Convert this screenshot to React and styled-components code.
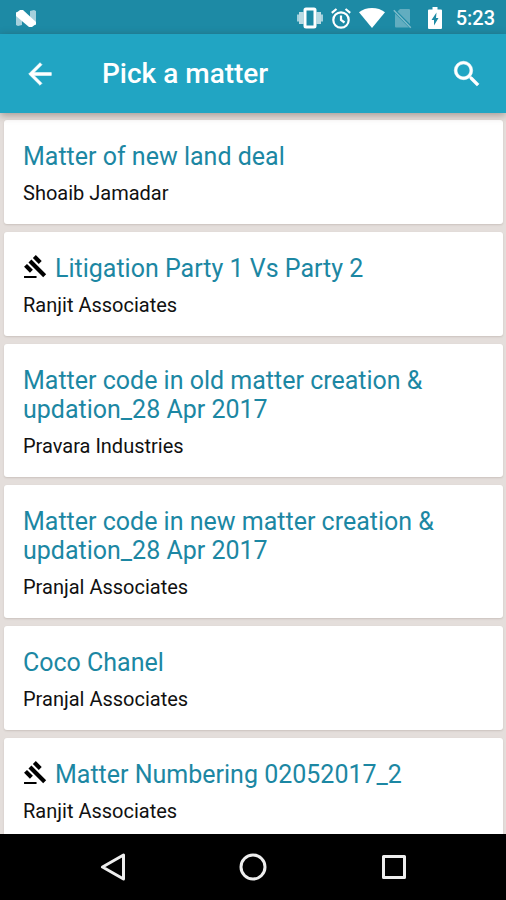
import React from 'react';
import styled, { createGlobalStyle } from 'styled-components';
import { MdArrowBack, MdGavel, MdSearch } from 'react-icons/md';

const GlobalStyle = createGlobalStyle`
	* {
		box-sizing: border-box;
	}

	body {
		margin: 0;
		background: #e4dedb;
		font-family: Roboto, "Liberation Sans", sans-serif;
	}
`;

const Screen = styled.div`
	display: flex;
	flex-direction: column;
	height: 100vh;
	overflow: hidden;
`;

const StatusBar = styled.div`
	display: flex;
	flex: none;
	align-items: center;
	justify-content: space-between;
	height: 34px;
	padding: 2px 11px 0 16px;
	background: #1d8aa5;
	color: #fff;

	svg {
		display: block;
	}
`;

const StatusIcons = styled.div`
	display: flex;
	align-items: center;
	gap: 8px;
`;

const Power = styled.div`
	display: flex;
	align-items: center;
	gap: 14px;
	margin-left: 8px;
`;

const Clock = styled.time`
	font-size: 20px;
	font-weight: 500;
	line-height: 24px;
`;

const AppBar = styled.header`
	position: relative;
	display: flex;
	flex: none;
	align-items: center;
	height: 79px;
	padding: 1px 22px 0 23px;
	background: #21a5c3;
	color: #fff;
	box-shadow: 0 2px 8px rgba( 60, 40, 30, 0.4 );

	h1 {
		flex: 1;
		margin: 0 0 0 45px;
		font-size: 28px;
		font-weight: 500;
		line-height: 32px;
	}
`;

const IconButton = styled.button`
	display: flex;
	flex: none;
	padding: 0;
	border: 0;
	background: none;
	color: inherit;
	font-size: 34px;
	cursor: pointer;

	path:last-child {
		stroke: currentColor;
		stroke-width: 0.4;
	}
`;

const MatterList = styled.ul`
	display: flex;
	flex: 1;
	flex-direction: column;
	gap: 8px;
	min-height: 0;
	margin: 0;
	padding: 7px 3px 7px 4px;
	overflow: hidden;
	list-style: none;
`;

const Card = styled.button`
	display: flex;
	flex-direction: column;
	gap: 11px;
	width: 100%;
	padding: 22px 19px 19px;
	border: 0;
	border-radius: 3px;
	background: #fff;
	box-shadow: 0 1px 2px rgba( 60, 40, 30, 0.15 );
	font-family: inherit;
	text-align: left;
	cursor: pointer;
`;

const MatterTitle = styled.span`
	display: flex;
	gap: 7px;
	color: #1c87a3;
	font-size: 25px;
	line-height: 29px;

	svg {
		flex: none;
		color: #000;
	}
`;

const Client = styled.span`
	color: #111;
	font-size: 20px;
	line-height: 23px;
`;

const NavBar = styled.nav`
	position: relative;
	display: flex;
	flex: none;
	height: 66px;
	padding: 0 42px;
	background: #000;
`;

const NavButton = styled.button`
	display: flex;
	flex: 1;
	align-items: center;
	justify-content: center;
	padding: 0;
	border: 0;
	background: none;
	cursor: pointer;

	svg {
		fill: none;
		stroke: #eee;
		stroke-width: 3;
		stroke-linejoin: round;
	}
`;

const NougatIcon = () => (
	<svg width="20" height="17" viewBox="0 0 20 17" aria-hidden="true">
		<path d="M0 2h6v13l-4 1-2-1zM14 1l4-1 2 1v14h-6z" fill="#a5d0dc" />
		<path d="M0 3 4 0h3l13 12v2l-4 3h-3L0 6z" fill="#fff" />
	</svg>
);

const VibrateIcon = () => (
	<svg width="26" height="22" viewBox="0 0 26 22" aria-hidden="true">
		<path d="M0 7.500h2v7H0zM24 7.500h2v7h-2z" fill="#a5d0dc" />
		<path d="M2 5h4.500v12H2zM19.500 5H24v12h-4.500z" fill="#b9dae3" />
		<rect x="8" y="2" width="10" height="18" rx="1" fill="none" stroke="#fff" strokeWidth="3" />
	</svg>
);

const AlarmIcon = () => (
	<svg width="20" height="21" viewBox="0 0 20 21" fill="none" stroke="#fff" strokeWidth="2.200" aria-hidden="true">
		<circle cx="10" cy="12" r="7.700" />
		<path d="M10 7.500V12l3.500 2.500M.8 4.800 5.500 1M19.200 4.800 14.500 1" />
	</svg>
);

const WifiIcon = () => (
	<svg width="26" height="20" viewBox="0 0 26 20" aria-hidden="true">
		<path d="M13 20 0 4.200C3.500 1.500 8 0 13 0s9.500 1.500 13 4.200z" fill="#fff" />
	</svg>
);

const NoSimIcon = () => (
	<svg width="19" height="21" viewBox="0 0 19 21" aria-hidden="true">
		<path d="M7 1h9a1 1 0 0 1 1 1v14L4.500 3.500zM2 5.500 16 19.500H3a1 1 0 0 1-1-1z" fill="#62adc0" />
		<path d="M.8 2.300 17.800 19.700" stroke="#7fbccb" strokeWidth="1.500" />
	</svg>
);

const BatteryIcon = () => (
	<svg width="14" height="22" viewBox="0 0 14 22" aria-hidden="true">
		<path d="M4.500 0h5v2.500H13a1 1 0 0 1 1 1V21a1 1 0 0 1-1 1H1a1 1 0 0 1-1-1V3.500a1 1 0 0 1 1-1h3.500z" fill="#fff" />
		<path d="M8.500 5.500 3.500 13H6v5.500L10.500 11H8z" fill="#1d8aa5" />
	</svg>
);

const matters = [
	{ id: 1, title: 'Matter of new land deal', client: 'Shoaib Jamadar' },
	{ id: 2, title: 'Litigation Party 1 Vs Party 2', client: 'Ranjit Associates', litigation: true },
	{ id: 3, title: 'Matter code in old matter creation & updation_28 Apr 2017', client: 'Pravara Industries' },
	{ id: 4, title: 'Matter code in new matter creation & updation_28 Apr 2017', client: 'Pranjal Associates' },
	{ id: 5, title: 'Coco Chanel', client: 'Pranjal Associates' },
	{ id: 6, title: 'Matter Numbering 02052017_2', client: 'Ranjit Associates', litigation: true },
];

const Matter = ( { title, client, litigation } ) => (
	<li>
		<Card type="button">
			<MatterTitle>
				{ litigation && <MdGavel size={ 25 } aria-hidden="true" /> }
				<span>{ title }</span>
			</MatterTitle>
			<Client>{ client }</Client>
		</Card>
	</li>
);

const App = () => (
	<Screen>
		<GlobalStyle />
		<StatusBar>
			<NougatIcon />
			<StatusIcons>
				<VibrateIcon />
				<AlarmIcon />
				<WifiIcon />
				<NoSimIcon />
				<Power>
					<BatteryIcon />
					<Clock>5:23</Clock>
				</Power>
			</StatusIcons>
		</StatusBar>
		<AppBar>
			<IconButton type="button" aria-label="Back">
				<MdArrowBack />
			</IconButton>
			<h1>Pick a matter</h1>
			<IconButton type="button" aria-label="Search">
				<MdSearch />
			</IconButton>
		</AppBar>
		<MatterList>
			{ matters.map( matter => (
				<Matter key={ matter.id } { ...matter } />
			) ) }
		</MatterList>
		<NavBar>
			<NavButton type="button" aria-label="System back">
				<svg width="26" height="28" viewBox="0 0 26 28">
					<path d="M24.500 2v24L3.500 14z" />
				</svg>
			</NavButton>
			<NavButton type="button" aria-label="Home">
				<svg width="28" height="28" viewBox="0 0 28 28">
					<circle cx="14" cy="14" r="12" />
				</svg>
			</NavButton>
			<NavButton type="button" aria-label="Recent apps">
				<svg width="26" height="26" viewBox="0 0 26 26">
					<rect x="2.500" y="2.500" width="21" height="21" />
				</svg>
			</NavButton>
		</NavBar>
	</Screen>
);

export default App;
